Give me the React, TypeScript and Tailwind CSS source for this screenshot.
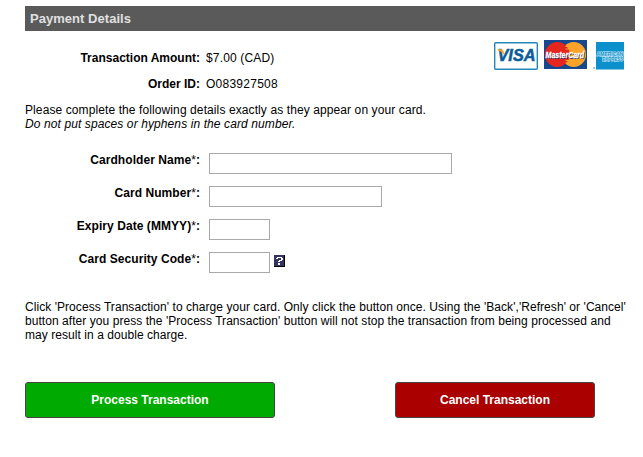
const fields = [
  { label: 'Cardholder Name', width: 'w-[243px]' },
  { label: 'Card Number', width: 'w-[173px]' },
  { label: 'Expiry Date (MMYY)', width: 'w-[61px]' },
  { label: 'Card Security Code', width: 'w-[61px]', help: true },
];

function CardLogos() {
  return (
    <svg className="overflow-visible" width="132" height="32" viewBox="0 0 132 32" fontFamily="Liberation Sans, sans-serif">
      {/* Visa */}
      <rect x="0.7" y="3.7" width="42.6" height="26.6" rx="1" fill="#fff" stroke="#2588b8" strokeWidth="1.4" />
      <text x="3.5" y="22" fontSize="16.2" fontWeight="bold" fontStyle="italic" fill="#0a5c97" stroke="#0a5c97" strokeWidth="0.5" textLength="38" lengthAdjust="spacingAndGlyphs">
        VISA
      </text>
      <path d="M3.5 10.2h4q1.700 0 2 1.800l.8 4.500Q8 12.300 3.500 11.200z" fill="#f6a823" />

      {/* MasterCard */}
      <rect x="50" y="1" width="43" height="29" fill="#17478c" />
      <circle cx="79.700" cy="15.500" r="12.400" fill="#fba429" />
      <circle cx="63.300" cy="15.500" r="12.400" fill="#e5261f" />
      <path d="M71.500 7.500h3.200M71.500 10h4.500M71.500 21.500h4.500M71.500 24h3.200" stroke="#fba429" strokeWidth="1" />
      <text x="52.300" y="19.700" fontSize="9.500" fontWeight="bold" fontStyle="italic" fill="#17335f" textLength="38.500" lengthAdjust="spacingAndGlyphs">
        MasterCard
      </text>
      <text x="51.600" y="19" fontSize="9.500" fontWeight="bold" fontStyle="italic" fill="#fff" stroke="#fff" strokeWidth="0.300" textLength="38.500" lengthAdjust="spacingAndGlyphs">
        MasterCard
      </text>

      {/* American Express */}
      <rect x="102" y="3" width="28" height="27.500" fill="#0c90cb" />
      <text x="102.800" y="17.300" fontSize="5" fontWeight="bold" fill="#0c90cb" stroke="#d5edf8" strokeWidth="1" paintOrder="stroke" textLength="26.500" lengthAdjust="spacingAndGlyphs">
        AMERICAN
      </text>
      <text x="108.300" y="22.300" fontSize="5" fontWeight="bold" fill="#0c90cb" stroke="#d5edf8" strokeWidth="1" paintOrder="stroke" textLength="21" lengthAdjust="spacingAndGlyphs">
        EXPRESS
      </text>
      <rect x="99.300" y="28" width="1.700" height="1.700" fill="#67bfe2" />
    </svg>
  );
}

function HelpIcon() {
  return (
    <svg width="11" height="12" viewBox="0 0 11 12" shapeRendering="crispEdges">
      <rect width="11" height="12" fill="#333366" />
      <path d="M0 11h11v1H0zM10 0h1v12h-1z" fill="#000" />
      <path d="M3 2h5v1H3zM2 3h2v1H2zM7 3h2v2H7zM5 5h3v1H5zM4 6h2v1H4zM4 8h2v2H4z" fill="#fff" />
    </svg>
  );
}

export default function App() {
  return (
    <div className="h-[457px] w-[643px] bg-white pt-[6px] pr-2 pl-[25px] font-['Liberation_Sans',Arial,sans-serif] text-[12px] leading-[14px] text-black">
      <h1 className="h-[25px] bg-[#5a5a5a] pl-[5px] text-[13px] leading-[25px] font-bold tracking-[0.04px] text-[#e0e0e0]">
        Payment Details
      </h1>

      <div className="flex h-[72px] justify-between pt-[8px] pr-[9px]">
        <dl className="grid grid-cols-[175px_auto] content-start gap-x-[6px] gap-y-3 pt-3">
          <dt className="text-right font-bold">Transaction Amount:</dt>
          <dd className="tracking-[0.15px]">$7.00 (CAD)</dd>
          <dt className="text-right font-bold">Order ID:</dt>
          <dd className="tracking-[0.25px]">O083927508</dd>
        </dl>
        <CardLogos />
      </div>

      <p className="tracking-[0.1px]">Please complete the following details exactly as they appear on your card.</p>
      <p className="tracking-[0.1px] italic">Do not put spaces or hyphens in the card number.</p>

      <form>
        <div className="flex flex-col gap-3 pt-[22px]">
          {fields.map((f) => (
            <div key={f.label} className="flex h-[21px]">
              <label className="w-[175px] text-right font-bold tracking-[0.06px]">
                {f.label}
                <span className="font-normal">*</span>:
              </label>
              <input
                aria-label={f.label}
                className={`ml-[9px] h-[21px] border border-[#a9a9a9] bg-white outline-none ${f.width}`}
              />
              {f.help && (
                <span className="mt-[3px] ml-1">
                  <HelpIcon />
                </span>
              )}
            </div>
          ))}
        </div>

        <p className="mt-[27px] w-[606px] tracking-[0.055px]">
          Click 'Process Transaction' to charge your card. Only click the button once. Using the 'Back','Refresh' or 'Cancel'
          button after you press the 'Process Transaction' button will not stop the transaction from being processed and
          may result in a double charge.
        </p>

        <div className="mt-10 flex gap-[120px]">
          <button type="button" className="h-9 w-[250px] rounded-[3px] border border-[#444] bg-[#00aa00] font-bold text-white">
            Process Transaction
          </button>
          <button type="button" className="h-9 w-[200px] rounded-[3px] border border-[#444] bg-[#aa0000] font-bold text-white">
            Cancel Transaction
          </button>
        </div>
      </form>
    </div>
  );
}
